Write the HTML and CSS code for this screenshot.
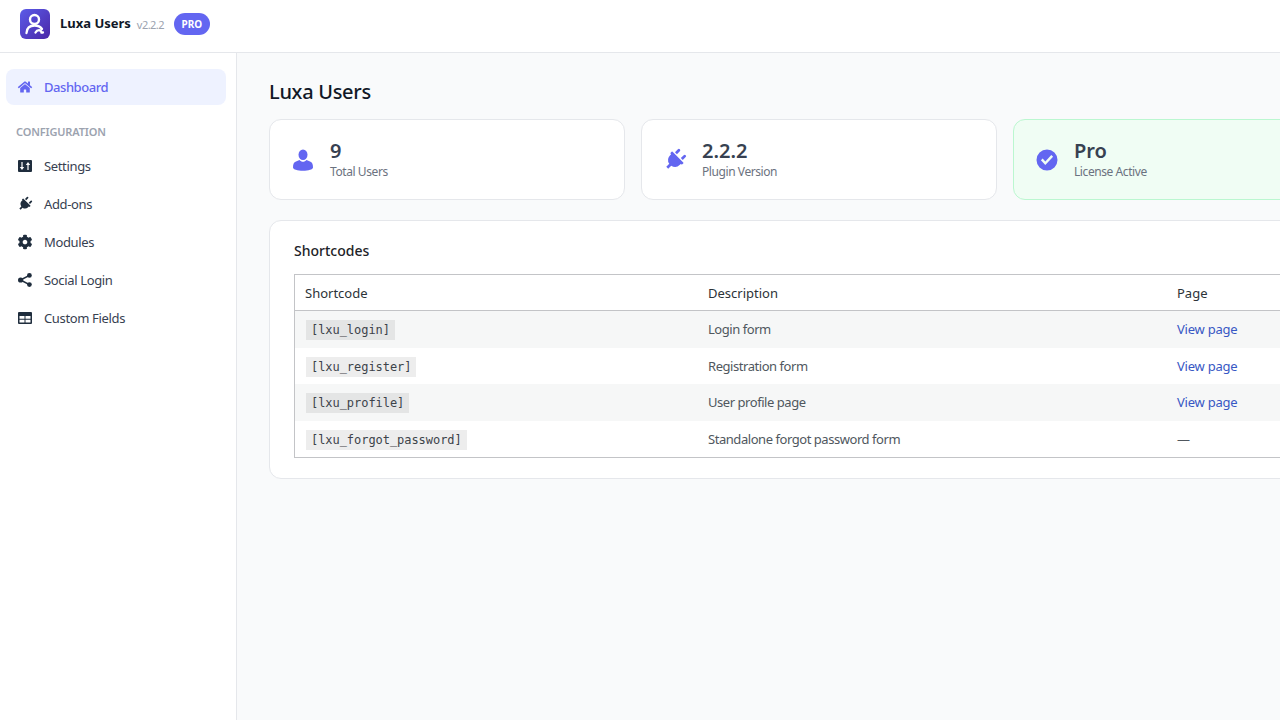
FILE: index.html
```html
<!DOCTYPE html>
<html lang="en">
<head>
  <meta charset="UTF-8" />
  <meta name="viewport" content="width=device-width, initial-scale=1.0" />
  <title>Luxa Users</title>
  <link rel="stylesheet" href="styles.css">
</head>
<body>
  <header class="topbar">
    <svg class="logo" viewBox="0 0 30 30">
      <defs>
        <linearGradient id="logoGrad" x1="0" y1="0" x2="1" y2="1">
          <stop offset="0" stop-color="#5b5be8"/>
          <stop offset="1" stop-color="#4a27a8"/>
        </linearGradient>
      </defs>
      <rect width="30" height="30" rx="6" fill="url(#logoGrad)"/>
      <circle cx="14.5" cy="10.5" r="4.5" fill="none" stroke="#fff" stroke-width="2.4"/>
      <path d="M6.5 24c.3-4.8 3.500-7.500 8-7.500 3.200 0 6 1.300 7.500 3.500M15.500 23.500c.8-1.500 2-2.300 3.500-2.300 1.200 0 2 .8 2.500 2.300h1.500" fill="none" stroke="#fff" stroke-width="2.300" stroke-linecap="round"/>
    </svg>
    <span class="brand">Luxa Users</span>
    <span class="version">v2.2.2</span>
    <span class="pro-badge">PRO</span>
  </header>

  <div class="layout">
    <nav class="sidebar">
      <a class="nav-item active">
        <svg class="nav-icon" viewBox="-72 -64 720 640"><path d="M280.37 148.26L96 300.11V464a16 16 0 0 0 16 16l112.06-.29a16 16 0 0 0 15.92-16V368a16 16 0 0 1 16-16h64a16 16 0 0 1 16 16v95.64a16 16 0 0 0 16 16.05L464 480a16 16 0 0 0 16-16V300L295.67 148.26a12.19 12.19 0 0 0-15.3 0zM571.6 251.47L488 182.56V44.05a12 12 0 0 0-12-12h-56a12 12 0 0 0-12 12v72.61L318.47 43a48 48 0 0 0-61 0L4.34 251.47a12 12 0 0 0-1.6 16.9l25.5 31A12 12 0 0 0 45.15 301l235.22-193.74a12.19 12.19 0 0 1 15.3 0L530.9 301a12 12 0 0 0 16.9-1.6l25.5-31a12 12 0 0 0-1.7-16.93z"/></svg>
        Dashboard
      </a>
      <div class="nav-label">CONFIGURATION</div>
      <a class="nav-item">
        <svg class="nav-icon" viewBox="-2 -2 18 16"><path fill-rule="evenodd" d="M1 0h12a1 1 0 0 1 1 1v10a1 1 0 0 1-1 1H1a1 1 0 0 1-1-1V1a1 1 0 0 1 1-1zM3.400 2v5H1.800L4 10l2.200-3H4.600V2zM9.400 10V5H7.800L10 2l2.200 3h-1.600v5z"/></svg>
        Settings
      </a>
      <a class="nav-item">
        <svg class="nav-icon" viewBox="-133 -33 650 578"><path transform="rotate(45 192 256)" d="M320 32a32 32 0 0 0-64 0v96h64zm48 128H16a16 16 0 0 0-16 16v32a16 16 0 0 0 16 16h16v32a160.070 160.070 0 0 0 128 156.800V512h64v-99.200A160.070 160.070 0 0 0 352 256v-32h16a16 16 0 0 0 16-16v-32a16 16 0 0 0-16-16zM128 32a32 32 0 0 0-64 0v96h64z"/></svg>
        Add-ons
      </a>
      <a class="nav-item">
        <svg class="nav-icon" viewBox="-51 -17 614 546"><path d="M487.400 315.700l-42.600-24.600c4.300-23.200 4.300-47 0-70.200l42.600-24.600c4.900-2.800 7.100-8.600 5.500-14-11.100-35.600-30-67.800-54.700-94.600-3.800-4.100-10-5.100-14.800-2.300L380.800 110c-17.900-15.400-38.500-27.300-60.800-35.100V25.800c0-5.600-3.900-10.500-9.400-11.700-36.700-8.200-74.300-7.800-109.200 0-5.500 1.200-9.400 6.100-9.400 11.700V75c-22.200 7.900-42.800 19.800-60.800 35.100L88.700 85.500c-4.900-2.800-11-1.900-14.800 2.300-24.700 26.700-43.600 58.900-54.700 94.600-1.700 5.400.6 11.200 5.500 14L67.300 221c-4.300 23.200-4.300 47 0 70.200l-42.600 24.600c-4.900 2.800-7.100 8.600-5.500 14 11.100 35.600 30 67.800 54.700 94.600 3.800 4.100 10 5.100 14.800 2.300l42.600-24.600c17.900 15.400 38.500 27.300 60.800 35.100v49.200c0 5.600 3.900 10.500 9.400 11.700 36.700 8.200 74.300 7.800 109.200 0 5.500-1.200 9.400-6.100 9.400-11.700v-49.200c22.200-7.900 42.800-19.800 60.800-35.100l42.600 24.600c4.900 2.800 11 1.900 14.800-2.300 24.700-26.700 43.600-58.900 54.700-94.600 1.500-5.500-.7-11.300-5.600-14.100zM256 336c-44.100 0-80-35.900-80-80s35.900-80 80-80 80 35.900 80 80-35.900 80-80 80z"/></svg>
        Modules
      </a>
      <a class="nav-item">
        <svg class="nav-icon" viewBox="-2 -1 18 16"><circle cx="2.600" cy="7" r="2.600"/><circle cx="11.400" cy="2.400" r="2.400"/><circle cx="11.400" cy="11.600" r="2.400"/><path d="M2.600 7l8.800-4.600M2.600 7l8.800 4.600" stroke="#1f2d3d" stroke-width="1.500"/></svg>
        Social Login
      </a>
      <a class="nav-item">
        <svg class="nav-icon" viewBox="-2 -2 18 16"><path fill-rule="evenodd" d="M1 0h12a1 1 0 0 1 1 1v10a1 1 0 0 1-1 1H1a1 1 0 0 1-1-1V1a1 1 0 0 1 1-1zM1.500 4v2.800h5V4zM7.500 4v2.800h5V4zM1.500 7.800v2.800h5V7.800zM7.500 7.800v2.800h5V7.800z"/></svg>
        Custom Fields
      </a>
    </nav>

    <main class="main">
      <h1 class="page-title">Luxa Users</h1>

      <div class="stats">
        <div class="stat-card">
          <svg class="stat-icon" viewBox="0 0 24 24"><ellipse cx="12" cy="6.800" rx="4.500" ry="5.300"/><path d="M2 19.500c0-3.500.8-5 3-6l3.500-1.500c1 1.200 2.200 1.800 3.500 1.800s2.500-.6 3.500-1.800l3.500 1.500c2.200 1 3 2.500 3 6 0 2-4.500 3.200-10 3.200S2 21.500 2 19.500z"/></svg>
          <div>
            <div class="stat-value">9</div>
            <div class="stat-label">Total Users</div>
          </div>
        </div>
        <div class="stat-card">
          <svg class="stat-icon" viewBox="-88 -24 560 560"><path transform="rotate(45 192 256)" d="M320 32a32 32 0 0 0-64 0v96h64zm48 128H16a16 16 0 0 0-16 16v32a16 16 0 0 0 16 16h16v32a160.070 160.070 0 0 0 128 156.800V512h64v-99.200A160.070 160.070 0 0 0 352 256v-32h16a16 16 0 0 0 16-16v-32a16 16 0 0 0-16-16zM128 32a32 32 0 0 0-64 0v96h64z"/></svg>
          <div>
            <div class="stat-value">2.2.2</div>
            <div class="stat-label">Plugin Version</div>
          </div>
        </div>
        <div class="stat-card success">
          <svg class="stat-icon" viewBox="0 0 24 24"><path fill-rule="evenodd" d="M12 1.500a10.500 10.500 0 1 1 0 21 10.500 10.500 0 0 1 0-21zM5.900 12.300l4.400 4.700 7.800-8.300-1.800-1.700-6 6.400-2.600-2.800z"/></svg>
          <div>
            <div class="stat-value">Pro</div>
            <div class="stat-label">License Active</div>
          </div>
        </div>
      </div>

      <section class="panel">
        <h2 class="panel-title">Shortcodes</h2>
        <table class="shortcodes">
          <thead>
            <tr><th class="col-code">Shortcode</th><th class="col-desc">Description</th><th>Page</th></tr>
          </thead>
          <tbody>
            <tr><td><code>[lxu_login]</code></td><td>Login form</td><td><a href="#">View page</a></td></tr>
            <tr><td><code>[lxu_register]</code></td><td>Registration form</td><td><a href="#">View page</a></td></tr>
            <tr><td><code>[lxu_profile]</code></td><td>User profile page</td><td><a href="#">View page</a></td></tr>
            <tr><td><code>[lxu_forgot_password]</code></td><td>Standalone forgot password form</td><td>—</td></tr>
          </tbody>
        </table>
      </section>
    </main>
  </div>
</body>
</html>
```

FILE: styles.css
```css
* { box-sizing: border-box; }
html, body { height: 100%; }
body {
  margin: 0;
  overflow: hidden;
  font-family: "Noto Sans", sans-serif;
  font-size: 13px;
  color: #1d2327;
  background: #f9fafb;
}

.topbar {
  height: 53px;
  display: flex;
  align-items: center;
  padding: 0 20px 4px;
  background: #fff;
  border-bottom: 1px solid #e5e7eb;
}
.logo { width: 30px; height: 30px; margin-right: 10px; flex: none; }
.brand { font-size: 13px; font-weight: 700; color: #111827; position: relative; top: -1px; }
.version { font-size: 11px; letter-spacing: -0.55px; color: #9ca3af; margin-left: 6px; }
.pro-badge {
  margin-left: 10px;
  padding: 0 7.5px;
  height: 22px;
  line-height: 22px;
  border-radius: 11px;
  background: #6366f1;
  color: #fff;
  font-size: 10px;
  font-weight: 700;
}

.layout { display: flex; height: calc(100% - 53px); }

.sidebar {
  width: 237px;
  flex: none;
  padding: 16px 10px 0 6px;
  background: #fff;
  border-right: 1px solid #e5e7eb;
}
.nav-item {
  height: 36px;
  display: flex;
  align-items: center;
  gap: 10px;
  margin-bottom: 2px;
  padding: 0 12px 0 10px;
  border-radius: 8px;
  color: #374151;
  font-size: 13px;
  letter-spacing: -0.35px;
}
.nav-item.active {
  background: #eef2ff;
  color: #6366f1;
  font-weight: 500;
  letter-spacing: -0.45px;
}
.nav-icon { width: 18px; height: 16px; flex: none; fill: #1f2d3d; }
.nav-item.active .nav-icon { fill: #6366f1; }
.nav-label {
  margin: 19px 0 8px 10px;
  height: 16px;
  line-height: 16px;
  font-size: 11px;
  font-weight: 600;
  letter-spacing: -0.15px;
  color: #9ca3af;
}

.main { flex: none; width: 1043px; padding: 24px 32px; }
.page-title {
  margin: 0 0 12px;
  height: 30px;
  line-height: 30px;
  font-size: 20px;
  font-weight: 500;
  letter-spacing: -0.3px;
  color: #111827;
}

.stats { display: flex; gap: 16px; width: 1100px; margin-bottom: 20px; }
.stat-card {
  width: 356px;
  height: 81px;
  display: flex;
  align-items: center;
  gap: 15px;
  padding: 0 21px;
  background: #fff;
  border: 1px solid #e5e7eb;
  border-radius: 12px;
}
.stat-card.success { background: #f0fdf4; border-color: #bbf7d0; }
.stat-icon { width: 24px; height: 24px; flex: none; fill: #6366f1; }
.stat-value {
  margin-bottom: 1px;
  font-size: 20px;
  line-height: 24px;
  font-weight: 600;
  color: #374151;
}
.stat-label { font-size: 12px; line-height: 16px; letter-spacing: -0.42px; color: #6b7280; }

.panel {
  width: 1100px;
  height: 259px;
  padding: 20px 24px;
  background: #fff;
  border: 1px solid #e5e7eb;
  border-radius: 12px;
}
.panel-title {
  margin: 0 0 13px;
  height: 20px;
  line-height: 20px;
  font-size: 14px;
  font-weight: 500;
  color: #1d2327;
}

.shortcodes {
  width: 100%;
  border: 1px solid #c3c4c7;
  border-collapse: separate;
  border-spacing: 0;
  table-layout: fixed;
  font-size: 13px;
}
.shortcodes th {
  height: 36px;
  padding: 0 10px;
  text-align: left;
  font-weight: 400;
  color: #2c3338;
  border-bottom: 1px solid #c3c4c7;
}
.col-code { width: 403px; }
.col-desc { width: 469px; }
.shortcodes td {
  height: 36.5px;
  padding: 0 10px;
  color: #50575e;
  letter-spacing: -0.45px;
}
.shortcodes tbody tr:nth-child(odd) { background: #f6f7f7; }
.shortcodes a { color: #3858c4; text-decoration: none; letter-spacing: -0.22px; }
.shortcodes code {
  padding: 3px 5px;
  margin-left: 1px;
  font-family: "DejaVu Sans Mono", monospace;
  font-size: 12px;
  letter-spacing: -0.05px;
  color: #3c434a;
  background: rgba(0,0,0,0.07);
}
```
